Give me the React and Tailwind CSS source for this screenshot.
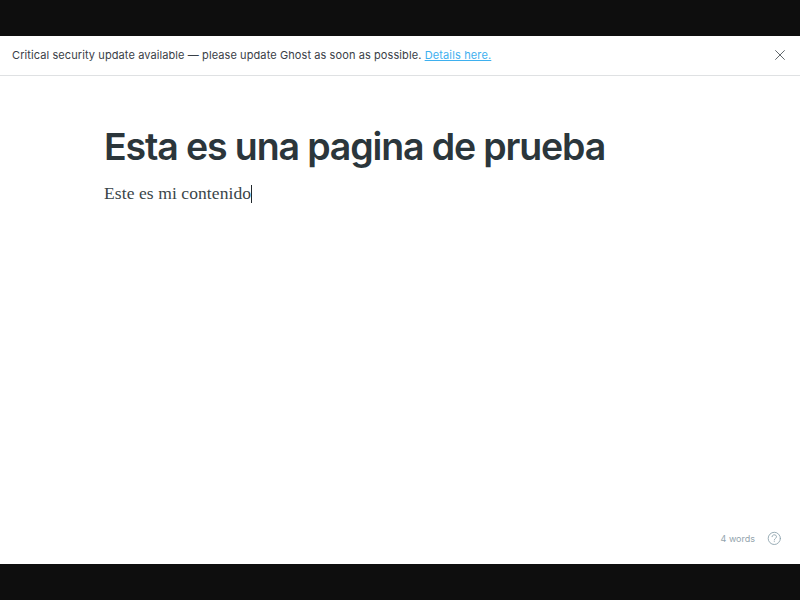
export default function App() {
  return (
    <div className="flex h-[600px] w-[800px] flex-col overflow-hidden bg-[#0e0e0e] py-9 font-['Inter',sans-serif]">
      <div className="flex min-h-0 flex-1 flex-col bg-white">
        <header className="flex h-10 shrink-0 items-center justify-between border-b border-[#dfe1e3] pr-[15px] pl-3">
          <p className="pb-px text-[11px] leading-4 tracking-[0.092px] whitespace-nowrap text-[#394047]">
            Critical security update available — please update Ghost as soon as possible.{' '}
            <a className="tracking-[0.14px] text-[#3eb0ef] underline">Details here.</a>
          </p>
          <svg className="mb-px size-[10px]" viewBox="0 0 10 10" fill="none" stroke="#50575b" strokeWidth="0.9">
            <path d="M0.3 0.3 9.7 9.7M9.7 0.3 0.3 9.7" />
          </svg>
        </header>
        <main className="flex-1 pt-[48px] pl-[104px]">
          <h1 className="text-[37.5px] leading-[46px] font-semibold tracking-[-1.14px] whitespace-nowrap text-[#2b363b]">Esta es una pagina de prueba</h1>
          <div className="mt-[14px] flex items-center">
            <p className="pb-[2px] font-['Liberation_Serif',serif] text-[17.5px] leading-[18px] tracking-[0.09px] whitespace-nowrap text-[#3a4549]">Este es mi contenido</p>
            <span className="h-[18px] w-px bg-[#20282c]" />
          </div>
        </main>
        <footer className="flex h-[51px] shrink-0 items-start justify-end gap-3 pr-[19px]">
          <span className="pt-[19px] text-[9px] leading-[13px] text-[#93a4ad]">4 words</span>
          <svg className="mt-[18px] size-[14px]" viewBox="0 0 14 14" fill="none" stroke="#8fa4ae" strokeWidth="0.9" strokeLinecap="round">
            <circle cx="7.3" cy="7.4" r="6.1" />
            <path d="M5 5.7C5 3.1 9.5 3.1 9.5 5.8C9.5 7.5 7.3 7.2 7.3 9M7.3 10.6v.1" />
          </svg>
        </footer>
      </div>
    </div>
  );
}
